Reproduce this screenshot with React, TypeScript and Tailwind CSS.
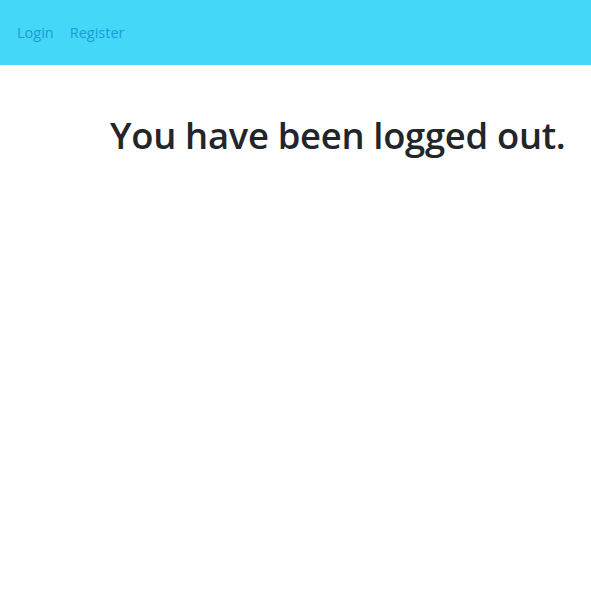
import React from "react";

export default function App() {
  return (
    <div className="min-h-[604px] bg-white" style={{ fontFamily: '"Open Sans", "Noto Sans", sans-serif' }}>
      <nav className="h-[65px] bg-[#45d7f8] flex items-center pl-[17px] gap-[16px] text-[14.5px] text-[#1b9bd7]">
        <a href="#">Login</a>
        <a href="#">Register</a>
      </nav>
      <div className="pl-[110px] pt-[44px]">
        <h1 className="text-[36.4px] leading-[52px] font-semibold text-[#222529] whitespace-nowrap tracking-[-0.3px]">
          You have been logged out.
        </h1>
      </div>
    </div>
  );
}
